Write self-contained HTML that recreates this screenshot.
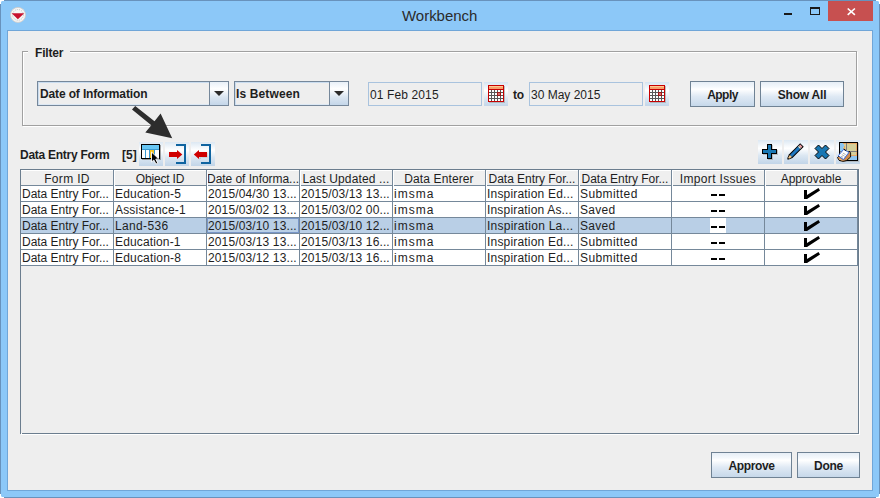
<!DOCTYPE html>
<html><head><meta charset="utf-8">
<style>
*{margin:0;padding:0;box-sizing:border-box}
html,body{width:880px;height:498px;overflow:hidden;background:#fff}
body{position:relative;font-family:"Liberation Sans",sans-serif;font-size:12px;color:#1e1e1e}
.a{position:absolute}
#frame{left:0;top:0;width:880px;height:498px;background:#8cc8f8;border:1px solid #6892bc}
.wc{position:absolute;background:#fff}
#content{left:7px;top:30px;width:866px;height:461px;border:1px solid #70a6d8;background:#eeeeee}
.t{position:absolute;white-space:nowrap;line-height:1}
.b{font-weight:bold}
.btn{position:absolute;border:1px solid #6f8294;background:linear-gradient(#e6eef6 0%,#f4f8fc 20%,#ffffff 30%,#dfe9f4 60%,#c6d8ea 100%)}
.btn span{position:absolute;left:0;right:0;text-align:center;font-weight:bold;line-height:1}
.tb{position:absolute;width:24px;height:24px;background:linear-gradient(#dce8f3 0%,#f6f9fc 25%,#ffffff 35%,#dbe7f2 65%,#c2d5e8 100%)}
.combo{position:absolute;border:1px solid #75879a;background:#eeeeee;box-shadow:inset 1px 1px 0 #c9dcef,inset -1px -1px 0 #dce8f4}
.combo .arr{position:absolute;right:0;top:0;bottom:0;width:19px;border-left:1px solid #75879a;background:linear-gradient(#e8f0f8 0%,#ffffff 30%,#dbe6f1 65%,#c4d6e9 100%)}
.tri{position:absolute;width:0;height:0;border-left:5px solid transparent;border-right:5px solid transparent;border-top:5px solid #2b2b2b}
.field{position:absolute;border:1px solid #a9c3de;background:#eeeeee}
.cal{position:absolute;width:24px;height:24px;background:linear-gradient(#d6e4f1 0%,#ffffff 35%,#dae6f2 70%,#c3d6e9 100%)}
</style></head><body>
<div id="frame" class="a"></div>
<div id="content" class="a"></div>
<div class="wc" style="left:0;top:0;width:4px;height:1px"></div><div class="wc" style="left:0;top:0;width:1px;height:4px"></div><div class="a" style="left:1px;top:1px;width:1px;height:1px;background:#c4e2fb"></div>
<div class="wc" style="left:876px;top:0;width:4px;height:1px"></div><div class="wc" style="left:879px;top:0;width:1px;height:4px"></div><div class="a" style="left:878px;top:1px;width:1px;height:1px;background:#c4e2fb"></div>
<div class="wc" style="left:0;top:497px;width:4px;height:1px"></div><div class="wc" style="left:0;top:494px;width:1px;height:4px"></div><div class="a" style="left:1px;top:496px;width:1px;height:1px;background:#c4e2fb"></div>
<div class="wc" style="left:876px;top:497px;width:4px;height:1px"></div><div class="wc" style="left:879px;top:494px;width:1px;height:4px"></div><div class="a" style="left:878px;top:496px;width:1px;height:1px;background:#c4e2fb"></div>


<!-- title bar -->
<svg class="a" style="left:9px;top:6px" width="19" height="19" viewBox="0 0 19 19">
  <circle cx="9" cy="8.9" r="7.5" fill="#f6f6f6" stroke="#d2cbc8" stroke-width="0.8"/>
  <circle cx="9" cy="8.9" r="5.4" fill="none" stroke="#8a8a8a" stroke-width="0.9" stroke-dasharray="0.9 1.1" opacity="0.55"/>
  <path d="M2.6 7.2 L15.2 7.2 L8.9 13.3 Z" fill="#c8102e"/>
</svg>
<div class="t" style="left:402px;top:8px;font-size:15px;color:#2b2b2b;letter-spacing:-0.03px">Workbench</div>
<div class="a" style="left:784px;top:13px;width:8px;height:2px;background:#1a1a1a"></div>
<div class="a" style="left:810px;top:7px;width:10px;height:8px;border:1px solid #1a1a1a;border-top-width:2px"></div>
<div class="a" style="left:828px;top:1px;width:45px;height:20px;background:#c75050"></div>
<svg class="a" style="left:846px;top:7px" width="11" height="10" viewBox="0 0 11 10"><path d="M1.7 1.5 L8.9 7.9 M8.9 1.5 L1.7 7.9" stroke="#fff" stroke-width="1.6"/></svg>

<!-- filter group -->
<div class="a" style="left:23px;top:52px;width:835px;height:75px;border:1px solid #fff"></div>
<div class="a" style="left:22px;top:51px;width:835px;height:75px;border:1px solid #a0a0a0"></div>
<div class="a" style="left:28px;top:48px;width:42px;height:8px;background:#eeeeee"></div>
<div class="t b" style="left:35px;top:47px;color:#1e1e1e;letter-spacing:-0.2px">Filter</div>

<div class="combo" style="left:37px;top:81px;width:192px;height:25px"><div class="arr"></div></div>
<div class="tri" style="left:214px;top:91px"></div>
<div class="t b" style="left:40px;top:88px;letter-spacing:-0.14px">Date of Information</div>

<div class="combo" style="left:234px;top:81px;width:115px;height:25px"><div class="arr"></div></div>
<div class="tri" style="left:334px;top:91px"></div>
<div class="t b" style="left:236px;top:88px;letter-spacing:0.13px">Is Between</div>

<div class="field" style="left:368px;top:82px;width:114px;height:24px"></div>
<div class="t" style="left:370px;top:89px;letter-spacing:0.12px">01 Feb 2015</div>
<div class="cal" style="left:484px;top:82px"></div>

<div class="t b" style="left:513px;top:89px;letter-spacing:-0.2px">to</div>

<div class="field" style="left:529px;top:82px;width:114px;height:24px"></div>
<div class="t" style="left:531px;top:89px">30 May 2015</div>
<div class="cal" style="left:645px;top:82px"></div>

<div class="btn" style="left:690px;top:81px;width:65px;height:26px"><span style="top:7px;letter-spacing:-0.55px">Apply</span></div>
<div class="btn" style="left:760px;top:81px;width:84px;height:26px"><span style="top:7px;letter-spacing:-0.21px">Show All</span></div>

<!-- data entry form -->
<div class="t b" style="left:20px;top:149px;letter-spacing:-0.26px">Data Entry Form</div>
<div class="t b" style="left:122px;top:149px">[5]</div>
<div class="tb" style="left:139px;top:142px"></div>
<div class="tb" style="left:165px;top:142px"></div>
<div class="tb" style="left:191px;top:142px"></div>

<div class="tb" style="left:758px;top:140px"></div>
<div class="tb" style="left:784px;top:140px"></div>
<div class="tb" style="left:810px;top:140px"></div>
<div class="tb" style="left:836px;top:140px"></div>

<!-- table -->
<div class="a" style="left:21px;top:170px;width:839px;height:265px;border:1px solid #fff"></div>
<div class="a" style="left:20px;top:169px;width:839px;height:265px;border:1px solid #6b7d8e;background:#eeeeee"></div>
<div class="a" style="left:21px;top:170px;width:837px;height:15px;background:#efefef;border-top:1px solid #fff"></div>
<div class="a" style="left:21px;top:185px;width:837px;height:1px;background:#75889a"></div>
<div class="t" style="left:21px;top:173px;width:92px;text-align:center;letter-spacing:0.32px;">Form ID</div>
<div class="t" style="left:114px;top:173px;width:92px;text-align:center;letter-spacing:-0.16px;">Object ID</div>
<div class="t" style="left:207px;top:173px;width:92px;text-align:center;letter-spacing:-0.04px;">Date of Informa...</div>
<div class="t" style="left:300px;top:173px;width:92px;text-align:center;letter-spacing:0.15px;">Last Updated ...</div>
<div class="t" style="left:393px;top:173px;width:92px;text-align:center;letter-spacing:0.11px;">Data Enterer</div>
<div class="t" style="left:486px;top:173px;width:92px;text-align:center;letter-spacing:-0.03px;">Data Entry For...</div>
<div class="t" style="left:579px;top:173px;width:92px;text-align:center;letter-spacing:-0.03px;">Data Entry For...</div>
<div class="t" style="left:672px;top:173px;width:92px;text-align:center;letter-spacing:0.33px;">Import Issues</div>
<div class="t" style="left:765px;top:173px;width:92px;text-align:center;">Approvable</div>
<div class="a" style="left:21px;top:186px;width:836px;height:15px;background:#ffffff"></div>
<div class="a" style="left:21px;top:201px;width:836px;height:1px;background:#75889a"></div>
<div class="t" style="left:22px;top:188px;letter-spacing:-0.03px;">Data Entry For...</div>
<div class="t" style="left:115px;top:188px;letter-spacing:0.18px;">Education-5</div>
<div class="t" style="left:208px;top:188px;letter-spacing:0.13px;">2015/04/30 13...</div>
<div class="t" style="left:301px;top:188px;letter-spacing:0.13px;">2015/03/13 13...</div>
<div class="t" style="left:394px;top:188px;letter-spacing:1.05px;">imsma</div>
<div class="t" style="left:487px;top:188px;letter-spacing:0.19px;">Inspiration Ed...</div>
<div class="t" style="left:580px;top:188px;letter-spacing:0.42px;">Submitted</div>
<div class="a" style="left:711px;top:194px;width:6px;height:2px;background:#000"></div>
<div class="a" style="left:719px;top:194px;width:6px;height:2px;background:#000"></div>
<svg class="a" style="left:803px;top:187px" width="18" height="13" viewBox="0 0 18 13"><path d="M1 3 L4 3 L4 8 L15.5 1 L17 3.5 L4 12 L1 12 Z" fill="#000"/></svg>
<div class="a" style="left:21px;top:202px;width:836px;height:15px;background:#ffffff"></div>
<div class="a" style="left:21px;top:217px;width:836px;height:1px;background:#75889a"></div>
<div class="t" style="left:22px;top:204px;letter-spacing:-0.03px;">Data Entry For...</div>
<div class="t" style="left:115px;top:204px;letter-spacing:0.18px;">Assistance-1</div>
<div class="t" style="left:208px;top:204px;letter-spacing:0.13px;">2015/03/02 13...</div>
<div class="t" style="left:301px;top:204px;letter-spacing:0.13px;">2015/03/02 00...</div>
<div class="t" style="left:394px;top:204px;letter-spacing:1.05px;">imsma</div>
<div class="t" style="left:487px;top:204px;letter-spacing:0.18px;">Inspiration As...</div>
<div class="t" style="left:580px;top:204px;letter-spacing:0.3px;">Saved</div>
<div class="a" style="left:711px;top:210px;width:6px;height:2px;background:#000"></div>
<div class="a" style="left:719px;top:210px;width:6px;height:2px;background:#000"></div>
<svg class="a" style="left:803px;top:203px" width="18" height="13" viewBox="0 0 18 13"><path d="M1 3 L4 3 L4 8 L15.5 1 L17 3.5 L4 12 L1 12 Z" fill="#000"/></svg>
<div class="a" style="left:21px;top:218px;width:836px;height:15px;background:#b9cfe6"></div>
<div class="a" style="left:21px;top:233px;width:836px;height:1px;background:#75889a"></div>
<div class="t" style="left:22px;top:220px;letter-spacing:-0.03px;">Data Entry For...</div>
<div class="t" style="left:115px;top:220px;letter-spacing:0.34px;">Land-536</div>
<div class="t" style="left:208px;top:220px;letter-spacing:0.13px;">2015/03/10 13...</div>
<div class="t" style="left:301px;top:220px;letter-spacing:0.13px;">2015/03/10 12...</div>
<div class="t" style="left:394px;top:220px;letter-spacing:1.05px;">imsma</div>
<div class="t" style="left:487px;top:220px;letter-spacing:0.25px;">Inspiration La...</div>
<div class="t" style="left:580px;top:220px;letter-spacing:0.3px;">Saved</div>
<div class="a" style="left:710px;top:218px;width:16px;height:15px;background:#fff"></div>
<div class="a" style="left:711px;top:226px;width:6px;height:2px;background:#000"></div>
<div class="a" style="left:719px;top:226px;width:6px;height:2px;background:#000"></div>
<svg class="a" style="left:803px;top:219px" width="18" height="13" viewBox="0 0 18 13"><path d="M1 3 L4 3 L4 8 L15.5 1 L17 3.5 L4 12 L1 12 Z" fill="#000"/></svg>
<div class="a" style="left:21px;top:234px;width:836px;height:15px;background:#ffffff"></div>
<div class="a" style="left:21px;top:249px;width:836px;height:1px;background:#75889a"></div>
<div class="t" style="left:22px;top:236px;letter-spacing:-0.03px;">Data Entry For...</div>
<div class="t" style="left:115px;top:236px;letter-spacing:0.14px;">Education-1</div>
<div class="t" style="left:208px;top:236px;letter-spacing:0.13px;">2015/03/13 13...</div>
<div class="t" style="left:301px;top:236px;letter-spacing:0.13px;">2015/03/13 16...</div>
<div class="t" style="left:394px;top:236px;letter-spacing:1.05px;">imsma</div>
<div class="t" style="left:487px;top:236px;letter-spacing:0.19px;">Inspiration Ed...</div>
<div class="t" style="left:580px;top:236px;letter-spacing:0.42px;">Submitted</div>
<div class="a" style="left:711px;top:242px;width:6px;height:2px;background:#000"></div>
<div class="a" style="left:719px;top:242px;width:6px;height:2px;background:#000"></div>
<svg class="a" style="left:803px;top:235px" width="18" height="13" viewBox="0 0 18 13"><path d="M1 3 L4 3 L4 8 L15.5 1 L17 3.5 L4 12 L1 12 Z" fill="#000"/></svg>
<div class="a" style="left:21px;top:250px;width:836px;height:15px;background:#ffffff"></div>
<div class="a" style="left:21px;top:265px;width:836px;height:1px;background:#75889a"></div>
<div class="t" style="left:22px;top:252px;letter-spacing:-0.03px;">Data Entry For...</div>
<div class="t" style="left:115px;top:252px;letter-spacing:0.18px;">Education-8</div>
<div class="t" style="left:208px;top:252px;letter-spacing:0.13px;">2015/03/12 13...</div>
<div class="t" style="left:301px;top:252px;letter-spacing:0.13px;">2015/03/13 16...</div>
<div class="t" style="left:394px;top:252px;letter-spacing:1.05px;">imsma</div>
<div class="t" style="left:487px;top:252px;letter-spacing:0.19px;">Inspiration Ed...</div>
<div class="t" style="left:580px;top:252px;letter-spacing:0.42px;">Submitted</div>
<div class="a" style="left:711px;top:258px;width:6px;height:2px;background:#000"></div>
<div class="a" style="left:719px;top:258px;width:6px;height:2px;background:#000"></div>
<svg class="a" style="left:803px;top:251px" width="18" height="13" viewBox="0 0 18 13"><path d="M1 3 L4 3 L4 8 L15.5 1 L17 3.5 L4 12 L1 12 Z" fill="#000"/></svg>
<div class="a" style="left:113px;top:170px;width:1px;height:96px;background:#75889a"></div>
<div class="a" style="left:114px;top:170px;width:1px;height:16px;background:#fff"></div>
<div class="a" style="left:206px;top:170px;width:1px;height:96px;background:#75889a"></div>
<div class="a" style="left:207px;top:170px;width:1px;height:16px;background:#fff"></div>
<div class="a" style="left:299px;top:170px;width:1px;height:96px;background:#75889a"></div>
<div class="a" style="left:300px;top:170px;width:1px;height:16px;background:#fff"></div>
<div class="a" style="left:392px;top:170px;width:1px;height:96px;background:#75889a"></div>
<div class="a" style="left:393px;top:170px;width:1px;height:16px;background:#fff"></div>
<div class="a" style="left:485px;top:170px;width:1px;height:96px;background:#75889a"></div>
<div class="a" style="left:486px;top:170px;width:1px;height:16px;background:#fff"></div>
<div class="a" style="left:578px;top:170px;width:1px;height:96px;background:#75889a"></div>
<div class="a" style="left:579px;top:170px;width:1px;height:16px;background:#fff"></div>
<div class="a" style="left:671px;top:170px;width:1px;height:96px;background:#75889a"></div>
<div class="a" style="left:672px;top:170px;width:1px;height:16px;background:#fff"></div>
<div class="a" style="left:764px;top:170px;width:1px;height:96px;background:#75889a"></div>
<div class="a" style="left:765px;top:170px;width:1px;height:16px;background:#fff"></div>
<div class="a" style="left:857px;top:170px;width:1px;height:96px;background:#75889a"></div>
<div class="a" style="left:21px;top:433px;width:1px;height:1px;background:#fff"></div>
<div class="a" style="left:207px;top:218px;width:92px;height:15px;border:1px solid #7896c8"></div>

<div class="btn" style="left:711px;top:452px;width:81px;height:26px"><span style="top:7px;letter-spacing:-0.37px">Approve</span></div>
<div class="btn" style="left:797px;top:452px;width:63px;height:26px"><span style="top:7px;letter-spacing:-0.27px">Done</span></div>

<!-- ICONS -->
<svg class="a" style="left:0;top:0" width="880" height="200" viewBox="0 0 880 200" shape-rendering="auto">
  <path d="M135.2 106 L154.5 121.3 L160.6 113.6 L172.2 138.2 L145.3 132.5 L151.3 125.3 L132 109.6 Z" fill="#2d2d2d"/>
</svg>
<!-- calendar icons -->
<svg class="a" style="left:488px;top:85px" width="18" height="19" viewBox="0 0 18 19" shape-rendering="crispEdges">
  <rect x="1" y="1" width="16" height="17" fill="#9a9a9a" opacity="0.6"/>
  <rect x="0" y="0" width="16" height="17" fill="#c80000"/>
  <rect x="1" y="1" width="14" height="1" fill="#ffc890"/>
  <rect x="1" y="2" width="14" height="2" fill="#f7a06c"/>
  <rect x="1" y="5" width="14" height="11" fill="#585858"/>
  <g fill="#fff">
    <rect x="1" y="5" width="2" height="2"/><rect x="4" y="5" width="2" height="2"/><rect x="7" y="5" width="2" height="2"/><rect x="10" y="5" width="2" height="2"/><rect x="13" y="5" width="2" height="2"/>
    <rect x="1" y="8" width="2" height="2"/><rect x="4" y="8" width="2" height="2"/><rect x="7" y="8" width="2" height="2"/><rect x="13" y="8" width="2" height="2"/>
    <rect x="1" y="11" width="2" height="2"/><rect x="4" y="11" width="2" height="2"/><rect x="7" y="11" width="2" height="2"/><rect x="10" y="11" width="2" height="2"/><rect x="13" y="11" width="2" height="2"/>
    <rect x="1" y="14" width="2" height="2"/><rect x="4" y="14" width="2" height="2"/><rect x="7" y="14" width="2" height="2"/><rect x="10" y="14" width="2" height="2"/><rect x="13" y="14" width="2" height="2"/>
  </g>
  <rect x="9" y="7" width="4" height="4" fill="#a01818"/>
  <rect x="10" y="8" width="2" height="2" fill="#d87070"/>
</svg>
<svg class="a" style="left:649px;top:85px" width="18" height="19" viewBox="0 0 18 19" shape-rendering="crispEdges">
  <rect x="1" y="1" width="16" height="17" fill="#9a9a9a" opacity="0.6"/>
  <rect x="0" y="0" width="16" height="17" fill="#c80000"/>
  <rect x="1" y="1" width="14" height="1" fill="#ffc890"/>
  <rect x="1" y="2" width="14" height="2" fill="#f7a06c"/>
  <rect x="1" y="5" width="14" height="11" fill="#585858"/>
  <g fill="#fff">
    <rect x="1" y="5" width="2" height="2"/><rect x="4" y="5" width="2" height="2"/><rect x="7" y="5" width="2" height="2"/><rect x="10" y="5" width="2" height="2"/><rect x="13" y="5" width="2" height="2"/>
    <rect x="1" y="8" width="2" height="2"/><rect x="4" y="8" width="2" height="2"/><rect x="7" y="8" width="2" height="2"/><rect x="13" y="8" width="2" height="2"/>
    <rect x="1" y="11" width="2" height="2"/><rect x="4" y="11" width="2" height="2"/><rect x="7" y="11" width="2" height="2"/><rect x="10" y="11" width="2" height="2"/><rect x="13" y="11" width="2" height="2"/>
    <rect x="1" y="14" width="2" height="2"/><rect x="4" y="14" width="2" height="2"/><rect x="7" y="14" width="2" height="2"/><rect x="10" y="14" width="2" height="2"/><rect x="13" y="14" width="2" height="2"/>
  </g>
  <rect x="9" y="7" width="4" height="4" fill="#a01818"/>
  <rect x="10" y="8" width="2" height="2" fill="#d87070"/>
</svg>

<!-- toolbar icon 1: table + cursor -->
<svg class="a" style="left:139px;top:142px" width="24" height="24" viewBox="0 0 24 24" shape-rendering="crispEdges">
  <rect x="3" y="3" width="19" height="15" fill="#777" opacity="0.65"/>
  <rect x="2" y="2" width="19" height="15" fill="#000"/>
  <rect x="3" y="3" width="17" height="4" fill="#66c6f4"/>
  <rect x="3" y="7" width="17" height="1" fill="#3a9ad0"/>
  <rect x="3" y="8" width="17" height="8" fill="#fff"/>
  <rect x="6" y="8" width="1" height="8" fill="#3a9ad0"/>
  <rect x="10" y="8" width="1" height="8" fill="#3a9ad0"/>
  <rect x="15" y="8" width="1" height="8" fill="#3a9ad0"/>
  <rect x="11" y="8" width="4" height="8" fill="#f6c21e"/>
</svg>
<svg class="a" style="left:139px;top:142px" width="24" height="24" viewBox="0 0 24 24">
  <path d="M12.5 10 L12.5 20 L14.8 18 L17 22 L18.8 21.2 L16.8 17.2 L19.8 17 Z" fill="#000" stroke="#fff" stroke-width="0.9" stroke-linejoin="miter"/>
</svg>

<!-- toolbar icon 2: arrow into bracket -->
<svg class="a" style="left:165px;top:142px" width="24" height="24" viewBox="0 0 24 24">
  <path d="M11 2 H21 V22 H11 V20 H19 V4 H11 Z" fill="#0f64a0" shape-rendering="crispEdges"/>
  <path d="M4 10 H12 V8 L17.3 12.5 L12 17 V15 H4 Z" fill="#d00000"/>
</svg>
<!-- toolbar icon 3: arrow out of bracket -->
<svg class="a" style="left:191px;top:142px" width="24" height="24" viewBox="0 0 24 24">
  <path d="M10 2 H20 V22 H10 V20 H18 V4 H10 Z" fill="#0f64a0" shape-rendering="crispEdges"/>
  <path d="M16.5 10.5 V15.5 H8.5 V17.5 Z" fill="#999" opacity="0.5"/>
  <path d="M16 10 H8 V8 L2.8 12.5 L8 17 V15 H16 Z" fill="#d00000"/>
</svg>

<!-- right toolbar: plus -->
<svg class="a" style="left:758px;top:140px" width="24" height="24" viewBox="0 0 24 24" shape-rendering="crispEdges">
  <path d="M10 5 H15 V10 H20 V15 H15 V20 H10 V15 H5 V10 H10 Z" fill="#888" opacity="0.45"/>
  <path d="M9 4 H14 V9 H19 V14 H14 V19 H9 V14 H4 V9 H9 Z" fill="#000"/>
  <path d="M10 5 H13 V10 H18 V13 H13 V18 H10 V13 H5 V10 H10 Z" fill="#1877b3"/>
</svg>
<!-- pencil -->
<svg class="a" style="left:784px;top:140px" width="24" height="24" viewBox="0 0 24 24">
  <g transform="translate(10.9 12) rotate(-45)">
    <path d="M-10.6 0 L-9.6 -1 L-6 -2.5 L10 -2.5 L10 2.5 L-6 2.5 L-9.6 1 Z" fill="#000"/>
    <rect x="-5.6" y="-1.5" width="11.4" height="3" fill="#1f78c0"/>
    <path d="M-8.9 -0.6 L-5.6 -1.5 L-5.6 1.5 L-8.9 0.6 Z" fill="#f4c88c"/>
    <rect x="5.8" y="-1.5" width="1.4" height="3" fill="#d8f2ea"/>
    <rect x="7.2" y="-1.5" width="1.9" height="3" fill="#f2a2aa"/>
  </g>
</svg>
<!-- delete X -->
<svg class="a" style="left:810px;top:140px" width="24" height="24" viewBox="0 0 24 24">
  <path d="M8.5 5 L12 8.5 L15.5 5 L19 8.5 L15.5 12 L19 15.5 L15.5 19 L12 15.5 L8.5 19 L5 15.5 L8.5 12 L5 8.5 Z" fill="#1877b3" stroke="#000" stroke-width="1"/>
</svg>
<!-- map -->
<svg class="a" style="left:836px;top:140px" width="24" height="24" viewBox="0 0 24 24" shape-rendering="crispEdges">
  <rect x="4" y="3" width="19" height="19" fill="#999" opacity="0.5"/>
  <rect x="3" y="2" width="19" height="19" fill="#000"/>
  <rect x="4" y="3" width="17" height="17" fill="#d3d09c"/>
  <rect x="4" y="3" width="3" height="9" fill="#8cc6f2"/>
  <rect x="7" y="3" width="14" height="1" fill="#e9a866"/>
  <rect x="7" y="3" width="1" height="4" fill="#e9a866"/>
  <rect x="8" y="6" width="1" height="5" fill="#e9a866"/>
  <rect x="7" y="4" width="1" height="3" fill="#8cc6f2"/>
  <rect x="20" y="4" width="1" height="12" fill="#e9a866"/>
  <rect x="10" y="3" width="1" height="8" fill="#7d7d7d"/>
  <rect x="4" y="11" width="17" height="1" fill="#7d7d7d"/>
  <rect x="15" y="15" width="6" height="1" fill="#e9a866"/>
  <rect x="14" y="16" width="7" height="4" fill="#8cc6f2"/>
  <rect x="14" y="15" width="1" height="2" fill="#e9a866"/>
</svg>
<svg class="a" style="left:836px;top:140px" width="24" height="24" viewBox="0 0 24 24">
  <path d="M1.5 17.5 L3 16 L7.4 19.2 L12.6 12.4 L13.2 11.2 L14.6 12.8 L14.6 17 L10.5 20.6 L7.2 21.4 L3 20.2 Z" fill="#cf8a4c" stroke="#000" stroke-width="0.9"/>
  <path d="M2.5 18.2 L6 19.6 L7 20.8 L3.2 19.8 Z" fill="#f2b878"/>
  <path d="M7.7 9.3 L12.9 12.5 L7.4 19.6 L2.3 15.7 Z" fill="#fff" stroke="#3c6fe6" stroke-width="1"/>
  <path d="M7.7 9.1 L10 10.6" stroke="#000" stroke-width="1"/>
  <path d="M6.8 13 L9.6 14.6 M5.8 14.6 L8.6 16.2 M4.9 16.1 L7 17.3" stroke="#9a9a9a" stroke-width="0.8"/>
</svg>
</body></html>
